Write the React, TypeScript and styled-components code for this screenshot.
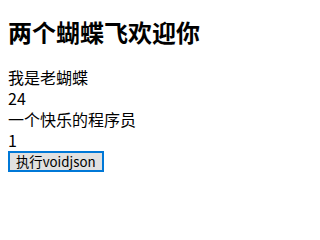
import React from "react";
import styled, { createGlobalStyle } from "styled-components";

const GlobalStyle = createGlobalStyle`
  body {
    margin: 0;
    background: #ffffff;
    font-family: "Noto Sans CJK SC", "Noto Sans", sans-serif;
    color: #000000;
  }
`;

const Page = styled.div`
  padding: 16px 8px 8px;
`;

const Title = styled.h2`
  margin: 0 0 19px;
  font-size: 24px;
  line-height: 32px;
  font-weight: 700;
`;

const Line = styled.div`
  font-size: 16px;
  line-height: 21px;
`;

const ActionButton = styled.button`
  display: block;
  height: 21px;
  margin-top: 0;
  padding: 0 6px;
  border: 2px solid #0078d7;
  border-radius: 0;
  background: #e1e1e1;
  color: #000000;
  font-family: "Noto Sans CJK SC", "Noto Sans", sans-serif;
  font-size: 13.33px;
  line-height: 15px;
`;

type Person = {
  name: string;
  age: number;
  description: string;
  count: number;
};

const person: Person = {
  name: "我是老蝴蝶",
  age: 24,
  description: "一个快乐的程序员",
  count: 1,
};

const App = () => {
  return (
    <>
      <GlobalStyle />
      <Page>
        <Title>两个蝴蝶飞欢迎你</Title>
        <Line>{person.name}</Line>
        <Line>{person.age}</Line>
        <Line>{person.description}</Line>
        <Line>{person.count}</Line>
        <ActionButton type="button">执行voidjson</ActionButton>
      </Page>
    </>
  );
};

export default App;
